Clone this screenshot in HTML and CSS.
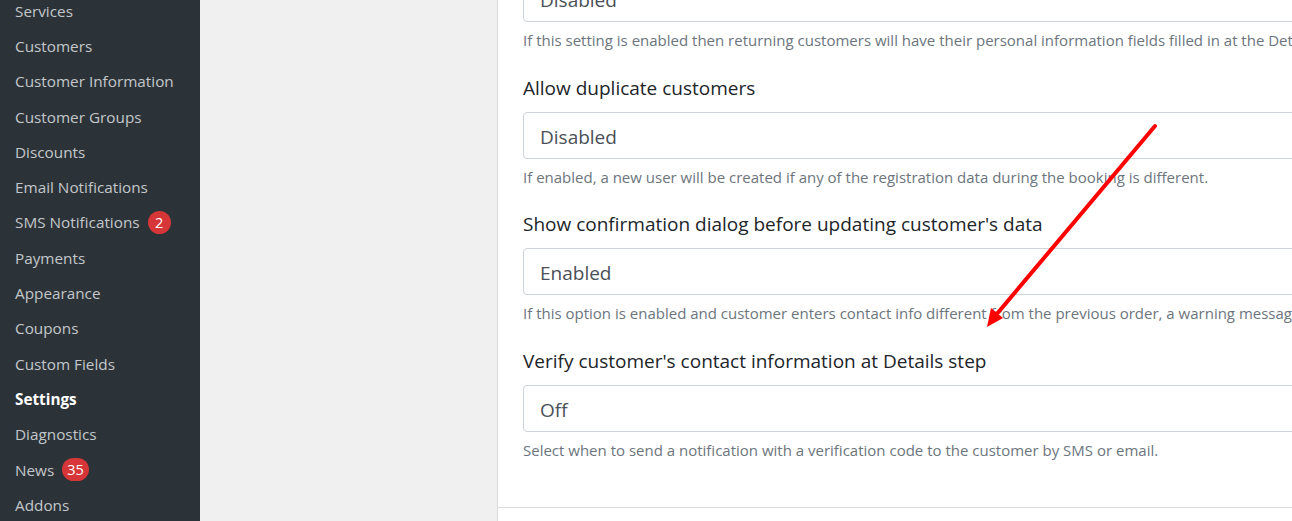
FILE: index.html
```html
<!DOCTYPE html>
<html lang="en">
<head>
<meta charset="utf-8">
<title>Settings</title>
<link rel="stylesheet" href="styles.css">
</head>
<body>
<div class="layout">
  <aside class="sidebar">
    <ul class="menu">
      <li class="item">Services</li>
      <li class="item">Customers</li>
      <li class="item">Customer Information</li>
      <li class="item">Customer Groups</li>
      <li class="item">Discounts</li>
      <li class="item">Email Notifications</li>
      <li class="item">SMS Notifications <span class="badge">2</span></li>
      <li class="item">Payments</li>
      <li class="item">Appearance</li>
      <li class="item">Coupons</li>
      <li class="item">Custom Fields</li>
      <li class="item current">Settings</li>
      <li class="item">Diagnostics</li>
      <li class="item">News <span class="badge">35</span></li>
      <li class="item">Addons</li>
    </ul>
  </aside>
  <main class="main">
    <section class="card">
      <div class="card-body">
        <div class="group">
          <label class="label">Remember personal information in cookies</label>
          <div class="select">Disabled</div>
          <p class="help">If this setting is enabled then returning customers will have their personal information fields filled in at the Details step with the data from their previous bookings.</p>
        </div>
        <div class="group">
          <label class="label">Allow duplicate customers</label>
          <div class="select">Disabled</div>
          <p class="help">If enabled, a new user will be created if any of the registration data during the booking is different.</p>
        </div>
        <div class="group">
          <label class="label">Show confirmation dialog before updating customer's data</label>
          <div class="select">Enabled</div>
          <p class="help">If this option is enabled and customer enters contact info different from the previous order, a warning message will appear asking to update the contact info.</p>
        </div>
        <div class="group">
          <label class="label">Verify customer's contact information at Details step</label>
          <div class="select">Off</div>
          <p class="help">Select when to send a notification with a verification code to the customer by SMS or email.</p>
        </div>
      </div>
      <div class="card-footer"></div>
    </section>
  </main>
</div>
<svg class="arrow" width="1292" height="521" viewBox="0 0 1292 521" aria-hidden="true">
  <line x1="1155" y1="126" x2="996" y2="315" stroke="#ff0000" stroke-width="4" stroke-linecap="round"/>
  <polygon points="987,327 1003,318 991,308" fill="#ff0000"/>
</svg>
</body>
</html>
```
FILE: styles.css
```css
html, body {
  margin: 0;
  padding: 0;
}
body {
  width: 1292px;
  height: 521px;
  overflow: hidden;
  font-family: "Open Sans", "Noto Sans", sans-serif;
  position: relative;
}
.layout {
  display: flex;
  height: 521px;
}
.sidebar {
  width: 200px;
  flex: none;
  background: #2c3338;
  overflow: hidden;
}
.menu {
  list-style: none;
  margin: -7px 0 0 0;
  padding: 0;
}
.item {
  height: 35.3px;
  display: flex;
  align-items: center;
  gap: 8px;
  padding-left: 15px;
  font-size: 15.3px;
  color: #c3c7cb;
  white-space: nowrap;
}
.item.current {
  color: #ffffff;
  font-weight: 700;
}
.badge {
  display: inline-flex;
  align-items: center;
  justify-content: center;
  min-width: 23px;
  height: 23px;
  padding: 0 5px;
  box-sizing: border-box;
  border-radius: 12px;
  background: #d63638;
  color: #ffffff;
  font-size: 14.5px;
}
.main {
  flex: 1;
  background: #f0f0f1;
  padding-left: 297px;
  overflow: hidden;
  display: flex;
}
.card {
  width: 1000px;
  flex: none;
  background: #ffffff;
  border-left: 1px solid #dcdcde;
  display: flex;
  flex-direction: column;
}
.card-body {
  margin-top: -64px;
  padding: 0 0 46px 25px;
}
.group + .group {
  margin-top: 21.5px;
}
.label {
  display: block;
  font-size: 19px;
  line-height: 30px;
  color: #212529;
  margin-bottom: 9px;
  white-space: nowrap;
}
.select {
  height: 47px;
  box-sizing: border-box;
  border: 1px solid #ced4da;
  border-radius: 4px;
  padding: 3px 0 0 16px;
  display: flex;
  align-items: center;
  font-size: 19px;
  color: #495057;
}
.help {
  margin: 7px 0 0 0;
  font-size: 15px;
  line-height: 22px;
  color: #6c757d;
  white-space: nowrap;
}
.card-footer {
  flex: 1;
  border-top: 1px solid #dcdcde;
}
.arrow {
  position: absolute;
  left: 0;
  top: 0;
  pointer-events: none;
}
```
